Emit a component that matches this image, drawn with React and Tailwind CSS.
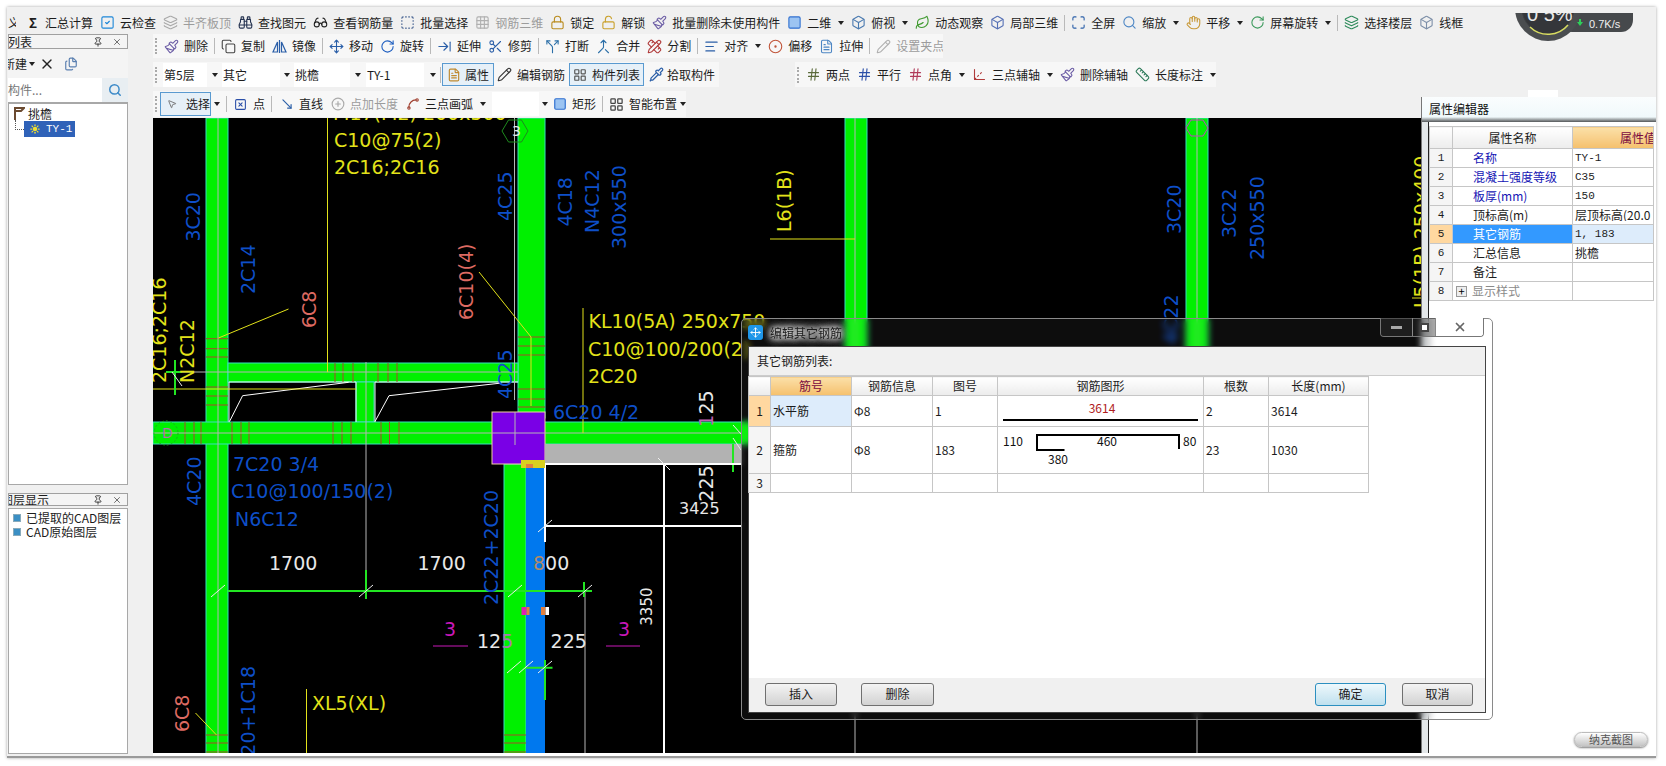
import {
  SquareCheck, Layers, Binoculars, Glasses, Grid3x3, Lock, LockOpen, Paintbrush, Square, Box, Leaf, Maximize, Search, Hand,
  RotateCw, Move, Scissors, ArrowRightToLine, Merge, Split, AlignLeft, CircleDot, FileText, Pencil, MousePointer2, SquareX,
  MoveDownRight, Spline, LayoutGrid, Pipette, Hash, Ruler, CirclePlus, Pin, X, Copy, Files, Axis3d, PencilRuler, SquareDashed, Sun,
} from 'lucide-react';

// 镜像 icon: two triangles either side of an axis, lucide has nothing close
const MirrorIcon = ({ size, color }) => (
  <svg viewBox="0 0 15 15" width={size} height={size} fill="none" stroke={color} strokeWidth="1.2">
    <path d="M7.5 1V14" />
    <path d="M5.5 3L1 13H5.5ZM9.5 3L14 13H9.5Z" />
  </svg>
);

const row1 = [
  { icon: SquareCheck, color: '#1c86d8', label: '云检查' },
  { icon: Layers, color: '#a8a8a8', label: '半齐板顶', off: true },
  { icon: Binoculars, color: '#23314f', label: '查找图元' },
  { icon: Glasses, color: '#222', label: '查看钢筋量' },
  { icon: SquareDashed, color: '#3c5a8c', label: '批量选择' },
  { icon: Grid3x3, color: '#b0b0b0', label: '钢筋三维', off: true },
  { icon: Lock, color: '#b98b1e', label: '锁定' },
  { icon: LockOpen, color: '#c9a02a', label: '解锁' },
  { icon: Paintbrush, color: '#6b5ca5', label: '批量删除未使用构件' },
  { icon: Square, color: '#2f6fd0', fill: '#9cc4f2', label: '二维', caret: true },
  { icon: Box, color: '#4a7ab0', label: '俯视', caret: true },
  { icon: Leaf, color: '#3f9a2f', label: '动态观察' },
  { icon: Box, color: '#5570b5', label: '局部三维' },
  { sep: true },
  { icon: Maximize, color: '#2b5fa8', label: '全屏' },
  { icon: Search, color: '#4d86c4', label: '缩放', caret: true },
  { icon: Hand, color: '#c99a3a', label: '平移', caret: true },
  { icon: RotateCw, color: '#3c9a5c', label: '屏幕旋转', caret: true },
  { sep: true },
  { icon: Layers, color: '#2d8a5a', label: '选择楼层' },
  { icon: Box, color: '#7d8fa8', label: '线框' },
];

const row2 = [
  { icon: Paintbrush, color: '#6b5ca5', label: '删除' },
  { sep: true },
  { icon: Copy, color: '#444', label: '复制' },
  { icon: MirrorIcon, color: '#2b5fa8', label: '镜像' },
  { sep: true },
  { icon: Move, color: '#2b5fa8', label: '移动' },
  { icon: RotateCw, color: '#1f5fc0', label: '旋转' },
  { sep: true },
  { icon: ArrowRightToLine, color: '#2b5fa8', label: '延伸' },
  { icon: Scissors, color: '#2b5fa8', label: '修剪' },
  { sep: true },
  { icon: Split, color: '#2b6fa8', label: '打断' },
  { icon: Merge, color: '#2b6fa8', label: '合并' },
  { icon: PencilRuler, color: '#b03a3a', label: '分割' },
  { sep: true },
  { icon: AlignLeft, color: '#2b5fa8', label: '对齐', caret: true },
  { icon: CircleDot, color: '#c0553a', label: '偏移' },
  { icon: FileText, color: '#4d86c4', label: '拉伸' },
  { sep: true },
  { icon: Pencil, color: '#b0b0b0', label: '设置夹点', off: true },
];

const row3Left = [
  { icon: Pencil, color: '#333', label: '编辑钢筋' },
];

const row3Axis = [
  { icon: Hash, color: '#5a6a3a', label: '两点' },
  { icon: Hash, color: '#2b4fa8', label: '平行' },
  { icon: Hash, color: '#b03a5a', label: '点角', caret: true },
  { icon: Axis3d, color: '#b03a3a', label: '三点辅轴', caret: true },
  { icon: Paintbrush, color: '#6b5ca5', label: '删除辅轴' },
  { icon: Ruler, color: '#2d7a5a', label: '长度标注', caret: true },
];

const Sep = () => <div className="w-px h-[16px] bg-[#b9b9b9] -mx-px shrink-0" />;
const Grip = () => <div className="h-[16px] border-l-2 border-dotted border-[#aaa] shrink-0" />;
const Caret = () => <span className="w-0 h-0 border-x-[3px] border-x-transparent border-t-[4px] border-t-[#222] shrink-0" />;

const Tool = ({ item }) => {
  if (item.sep) return <Sep />;
  const Icon = item.icon;
  return (
    <div className={item.off ? 'flex items-center shrink-0 text-[#9c9c9c]' : 'flex items-center shrink-0 text-[#1c1c1c]'}>
      <Icon size={15} color={item.color} fill={item.fill || 'none'} strokeWidth={1.75} />
      <span className="ml-[5px] whitespace-nowrap">{item.label}</span>
      {item.caret && <span className="ml-[7px] flex"><Caret /></span>}
    </div>
  );
};

const Select = ({ text, w, arrow }) => (
  <div className="flex items-center shrink-0 h-[24px]">
    <div className="bg-white h-full flex items-center px-px whitespace-nowrap" style={{ width: w }}>{text}</div>
    <div className="flex justify-center" style={{ width: arrow }}><Caret /></div>
  </div>
);

const T = ({ x, y, c, s = 19, r, children }) => (
  <text x={x} y={y} fill={c} fontSize={s} transform={r ? `rotate(-90 ${x} ${y})` : undefined}>{children}</text>
);

const yellow = '#e2e21a';
const blue = '#0e4fc8';
const salmon = '#dd6a62';
const white = '#e8e8e8';
const magenta = '#c818b8';
const tie = '#a8482a';

const CadCanvas = () => (
  <svg viewBox="153 118 1275 635" className="w-[1275px] h-[635px] bg-black shrink-0 block [font-family:'DejaVu_Sans',sans-serif]">
    {/* columns and beams */}
    <g fill="#00f000" stroke="#38e0c0" strokeWidth="1">
      <rect x="206" y="118" width="22" height="640" />
      <rect x="518" y="118" width="27" height="300" />
      <rect x="845" y="118" width="22" height="240" />
      <rect x="1186" y="118" width="22" height="240" />
      <rect x="228" y="363" width="290" height="19" />
      <rect x="356" y="382" width="18" height="40" />
      <rect x="153" y="422" width="600" height="22" />
      <rect x="504" y="464" width="22" height="290" />
    </g>
    <rect x="492" y="412" width="53" height="52" fill="#7a00e6" stroke="#f0d0a0" />
    <rect x="545" y="444" width="196" height="20" fill="#b2b2b2" />
    <rect x="526" y="464" width="19" height="290" fill="#0078ee" />
    <path d="M229 422V382H356V422M375 422V382H518" fill="none" stroke="#e8fff0" />
    <path d="M229.5 421.5L242.6 395.7L348.6 382.3M375 421.5L389 395.7L501.6 383" fill="none" stroke="#fff" />
    {/* stirrups */}
    <path
      d="M206 338.7H228M206 348.7H228M206 357H228M206 387H228M206 396H228M206 405H228M518 337H545M518 346H545M518 355H545M518 389H545M518 399H545M518 407H545M335 363V382M343 363V382M353 363V382M378 363V382M388 363V382M397 363V382M185 422V444M194 422V444M201 422V444M232 422V444M241 422V444M249 422V444M333 422V444M342 422V444M351 422V444M381 422V444M389.5 422V444M399 422V444M206 735H228M206 743H228M206 752H228M504 735H526M504 743H526M504 752H526"
      stroke={tie}
      strokeWidth="1"
    />
    {/* axes */}
    <path d="M218 118V753M514.5 118V400M515 412V445M167 372H518M153 433H741M366 362V583M585 591V753M855 118V753M1197 118V753" stroke="#b5b5b5" strokeWidth="1" />
    <path d="M327.5 118V372M583 308V433M153 389H356M218.5 338L288.5 309M479 272L531 337M531 337V406M195.5 713L216.5 735M306.5 689V753M770 239H855M1412 298H1421" stroke={yellow} strokeWidth="1" fill="none" />
    <path d="M228 591H592M366 570V599M584 582V597M526 667.7H552.5M545 660V700M733 444V472M175 360V395M166 372H182" stroke="#22e622" strokeWidth="2" fill="none" />
    <path d="M545 526H741M545 464V542M664 464V753M545 464H741" stroke="#fff" strokeWidth="2" fill="none" />
    <path d="M211 597L225 585M359 597L373 585M508 597L522 585M578 597L592 585M507 673L521 661M519 673L533 661M538 673L552 661M538 532L552 520M658 458L670 470M172 372L182 386M733 425L741 434M733 438L741 450" stroke="#eee" strokeWidth="1" />
    {/* grid markers */}
    <polygon points="502,131 508.5,120 521.5,120 528,131 521.5,142 508.5,142" fill="none" stroke="#1e8a1e" />
    <circle cx="166" cy="433" r="12" fill="none" stroke="#1eaa1e" strokeDasharray="2 2" />
    <polygon points="1186,128 1191,120 1203,120 1208,128 1203,136 1191,136" fill="none" stroke="#c040c0" />
    <T x={512} y={136} c={white} s={14}>3</T>
    <T x={162} y={438} c="#b070b0" s={14}>D</T>
    {/* handles */}
    <rect x="521" y="460" width="24" height="8" fill="#d8d020" />
    <rect x="526" y="464" width="7" height="4" fill="#e08040" />
    <rect x="521.5" y="607" width="5" height="8" fill="#e020b0" />
    <rect x="526.5" y="607" width="3" height="8" fill="#e08040" />
    <rect x="541" y="607" width="4.5" height="8" fill="#e08040" />
    <rect x="545.5" y="607" width="3.5" height="8" fill="#fff" />
    {/* yellow labels */}
    <T x={333} y={120} c={yellow}>M17(M2) 200x500</T>
    <T x={334} y={147} c={yellow}>C10@75(2)</T>
    <T x={334} y={174} c={yellow}>2C16;2C16</T>
    <T x={588.5} y={328} c={yellow}>KL10(5A) 250x750</T>
    <T x={588} y={356} c={yellow}>C10@100/200(2)</T>
    <T x={588} y={383} c={yellow}>2C20</T>
    <T x={312} y={710} c={yellow}>XL5(XL)</T>
    <T x={166} y={383} c={yellow} r>2C16;2C16</T>
    <T x={193.6} y={383} c={yellow} r>N2C12</T>
    <T x={791} y={232} c={yellow} r>L6(1B)</T>
    <T x={1428} y={308} c={yellow} r>L5(1B) 250x400</T>
    {/* blue labels */}
    <T x={200.5} y={241.6} c={blue} r>3C20</T>
    <T x={255} y={294} c={blue} r>2C14</T>
    <T x={512} y={221} c={blue} r>4C25</T>
    <T x={512} y={399} c={blue} r>4C25</T>
    <T x={572.5} y={226.6} c={blue} r>4C18</T>
    <T x={599} y={233} c={blue} r>N4C12</T>
    <T x={626} y={249} c={blue} r>300x550</T>
    <T x={553} y={419} c={blue}>6C20 4/2</T>
    <T x={200.5} y={506} c={blue} r>4C20</T>
    <T x={233} y={470.7} c={blue}>7C20 3/4</T>
    <T x={231} y={498} c={blue}>C10@100/150(2)</T>
    <T x={235} y={525.7} c={blue}>N6C12</T>
    <T x={498} y={605} c={blue} r>2C22+2C20</T>
    <T x={255} y={781} c={blue} r>2C20+1C18</T>
    <T x={1181} y={234} c={blue} r>3C20</T>
    <T x={1236} y={238} c={blue} r>3C22</T>
    <T x={1264} y={260} c={blue} r>250x550</T>
    <T x={1178} y={344} c={blue} r>4C22</T>
    {/* salmon labels */}
    <T x={316} y={328} c={salmon} r>6C8</T>
    <T x={473} y={320} c={salmon} r>6C10(4)</T>
    <T x={189} y={732} c={salmon} r>6C8</T>
    {/* dimensions */}
    <T x={269} y={570} c={white}>1700</T>
    <T x={417.5} y={570} c={white}>1700</T>
    <T x={533} y={570} c={white}><tspan fill="#b08a68">8</tspan>00</T>
    <T x={477} y={647.7} c={white}>12<tspan fill="#a87ab0">5</tspan></T>
    <T x={550.6} y={648} c={white}>225</T>
    <T x={652} y={625.7} c={white} s={15} r>3350</T>
    <T x={679} y={514} c={white} s={16}>3425</T>
    <T x={713} y={501.7} c={white} r>225</T>
    <T x={713} y={426.7} c={white} r><tspan fill="#c060b0">1</tspan>25</T>
    <T x={444} y={635.7} c={magenta}>3</T>
    <T x={618} y={635.7} c={magenta}>3</T>
    <path d="M433 646H468M606 646H640" stroke={magenta} />
  </svg>
);

const propRows = [
  { name: '名称', value: 'TY-1', mono: true, link: true },
  { name: '混凝土强度等级', value: 'C35', mono: true, link: true },
  { name: '板厚(mm)', value: '150', mono: true, link: true },
  { name: '顶标高(m)', value: '层顶标高(20.0' },
  { name: '其它钢筋', value: '1, 183', mono: true, active: true },
  { name: '汇总信息', value: '挑檐' },
  { name: '备注', value: '' },
  { name: '显示样式', value: '', group: true },
];

const cellBorder = 'border border-[#c6c6c6]';
const headCell = `${cellBorder} bg-gradient-to-b from-white to-[#ececec] font-normal`;
const orangeCell = `${cellBorder} bg-gradient-to-b from-[#fbe0a8] to-[#f5c06c] text-[#7a0a40] font-normal`;
const monoText = "[font-family:'Liberation_Mono','Noto_Sans_CJK_SC',monospace] text-[11px]";

const PropertyEditor = () => (
  <div className="absolute left-[1421px] top-[97px] w-[235px] h-[656px] flex flex-col border-l border-[#777] bg-[#e4e8ea]">
    <div className="h-[25px] shrink-0 flex items-center pl-[7px] pb-[2px] bg-gradient-to-b from-[#fafdfe] via-[#f0f9fb] via-80% to-[#55585a] text-[#111]">属性编辑器</div>
    <div className="flex-1 ml-[6px] bg-white border-l border-[#222] pt-[4px]">
      <table className="table-fixed border-collapse w-[224px] text-[12px]">
        <colgroup>
          <col className="w-[23px]" />
          <col className="w-[120px]" />
          <col className="w-[81px]" />
        </colgroup>
        <thead>
          <tr className="h-[22px]">
            <th className={headCell} />
            <th className={headCell}>属性名称</th>
            <th className={orangeCell}><div className="whitespace-nowrap overflow-hidden pl-[47px] text-left">属性值</div></th>
          </tr>
        </thead>
        <tbody>
          {propRows.map((row, i) => (
            <tr key={row.name} className="h-[19px]">
              <td className={row.active ? `${cellBorder} bg-[#ffd8a0] text-center ${monoText}` : `${cellBorder} bg-[#f5f5f5] text-center ${monoText}`}>{i + 1}</td>
              <td className={row.active ? `${cellBorder} bg-[#3399ff] text-white` : cellBorder}>
                <div className="flex items-center whitespace-nowrap">
                  {row.group ? (
                    <>
                      <span className="w-[11px] h-[11px] ml-[3px] mr-[5px] border border-[#999] bg-[#eee] text-[11px] leading-[9px] text-center text-black">+</span>
                      <span className="text-[#8a8a8a]">{row.name}</span>
                    </>
                  ) : (
                    <span className={row.link ? 'ml-[20px] text-[#1414b4]' : 'ml-[20px]'}>{row.name}</span>
                  )}
                </div>
              </td>
              <td className={row.active ? `${cellBorder} bg-[#ddecfb]` : cellBorder}>
                <div className={row.mono ? `pl-[2px] whitespace-nowrap overflow-hidden ${monoText}` : 'pl-[2px] whitespace-nowrap overflow-hidden'}>{row.value}</div>
              </td>
            </tr>
          ))}
        </tbody>
      </table>
    </div>
  </div>
);

const DialogButton = ({ children, primary, className }) => (
  <button
    type="button"
    className={
      primary
        ? `h-[23px] rounded-[3px] border border-[#2b8fc0] bg-gradient-to-b from-[#eef8fc] to-[#bfe0ee] text-[12px] ${className}`
        : `h-[23px] rounded-[3px] border border-[#707070] bg-gradient-to-b from-[#f4f4f4] to-[#d2d2d2] text-[12px] ${className}`
    }
  >
    {children}
  </button>
);

const RebarDialog = () => (
  <div className="absolute left-[741px] top-[318px] w-[752px] h-[402px] rounded-[5px] border border-[#8a8a8a] bg-white/5 backdrop-blur-[3px] flex flex-col px-[6px] pb-[6px]">
    <div className="h-[27px] shrink-0 flex items-center relative">
      <span className="w-[15px] h-[15px] rounded-[3px] bg-[#1e96e8] flex items-center justify-center"><Move size={11} color="#fff" /></span>
      <span className="ml-[7px] text-[#1c1c1c] [text-shadow:0_0_8px_#e4e4e4,0_0_8px_#e4e4e4,0_0_8px_#e4e4e4,0_0_4px_#e4e4e4]">编辑其它钢筋</span>
      <div className="absolute right-[2px] top-[-1px] h-[19px] flex rounded-b-[4px] border border-t-0 border-[#777] overflow-hidden">
        <div className="w-[32px] bg-[#2a2a2a]/60 flex items-center justify-center border-r border-[#888]"><span className="w-[11px] h-[3px] bg-[#a8a8a8]" /></div>
        <div className="w-[23px] bg-[#2a2a2a]/40 flex items-center justify-center border-r border-[#888]"><span className="w-[9px] h-[9px] border-2 border-[#444] bg-white" /></div>
        <div className="w-[47px] bg-white flex items-center justify-center"><X size={14} color="#666" strokeWidth={3} /></div>
      </div>
    </div>
    <div className="flex-1 bg-white flex flex-col border border-[#444] text-[#1c1c1c]">
      <div className="h-[29px] shrink-0 bg-[#f0f0f0] flex items-center pl-[8px] border-b border-[#ccc]">其它钢筋列表:</div>
      <div className="flex-1">
        <table className="table-fixed border-collapse w-[620px] -ml-px text-[12px]">
          <colgroup>
            <col className="w-[22px]" />
            <col className="w-[81px]" />
            <col className="w-[81px]" />
            <col className="w-[65px]" />
            <col className="w-[206px]" />
            <col className="w-[65px]" />
            <col className="w-[100px]" />
          </colgroup>
          <thead>
            <tr className="h-[19px]">
              <th className={headCell} />
              <th className={orangeCell}>筋号</th>
              <th className={headCell}>钢筋信息</th>
              <th className={headCell}>图号</th>
              <th className={headCell}>钢筋图形</th>
              <th className={headCell}>根数</th>
              <th className={headCell}>长度(mm)</th>
            </tr>
          </thead>
          <tbody>
            <tr className="h-[30px]">
              <td className={`${cellBorder} bg-[#ffd8a0] text-center`}>1</td>
              <td className={`${cellBorder} bg-[#ddecfb] pl-[2px]`}>水平筋</td>
              <td className={`${cellBorder} pl-[2px]`}>Φ8</td>
              <td className={`${cellBorder} pl-[2px]`}>1</td>
              <td className={`${cellBorder} p-0`}>
                <svg viewBox="0 0 206 30" className="block w-[206px] h-[30px]">
                  <text x="104" y="17" fill="#b01c1c" fontSize="12" textAnchor="middle">3614</text>
                  <path d="M5 24H200" stroke="#000" strokeWidth="2" />
                </svg>
              </td>
              <td className={`${cellBorder} pl-[2px]`}>2</td>
              <td className={`${cellBorder} pl-[2px]`}>3614</td>
            </tr>
            <tr className="h-[46px]">
              <td className={`${cellBorder} bg-[#f5f5f5] text-center`}>2</td>
              <td className={`${cellBorder} pl-[2px]`}>箍筋</td>
              <td className={`${cellBorder} pl-[2px]`}>Φ8</td>
              <td className={`${cellBorder} pl-[2px]`}>183</td>
              <td className={`${cellBorder} p-0`}>
                <svg viewBox="0 0 206 46" className="block w-[206px] h-[46px]">
                  <path d="M66.5 23H39V8H181V22" fill="none" stroke="#000" strokeWidth="2" />
                  <g fill="#111" fontSize="12">
                    <text x="5" y="19">110</text>
                    <text x="109" y="19" textAnchor="middle">460</text>
                    <text x="185" y="19">80</text>
                    <text x="60" y="37" textAnchor="middle">380</text>
                  </g>
                </svg>
              </td>
              <td className={`${cellBorder} pl-[2px]`}>23</td>
              <td className={`${cellBorder} pl-[2px]`}>1030</td>
            </tr>
            <tr className="h-[19px]">
              <td className={`${cellBorder} bg-[#f5f5f5] text-center`}>3</td>
              {[0, 1, 2, 3, 4, 5].map(i => <td key={i} className={cellBorder} />)}
            </tr>
          </tbody>
        </table>
      </div>
      <div className="h-[34px] shrink-0 bg-[#f0f0f0] flex items-center pl-[16px] pr-[12px] pb-[2px]">
        <DialogButton className="w-[72px]">插入</DialogButton>
        <DialogButton className="w-[73px] ml-[24px]">删除</DialogButton>
        <DialogButton primary className="w-[71px] ml-auto">确定</DialogButton>
        <DialogButton className="w-[71px] ml-[16px]">取消</DialogButton>
      </div>
    </div>
  </div>
);

const SpeedWidget = () => (
  <svg viewBox="1510 13 130 32" className="absolute left-[1510px] top-[13px] w-[130px] h-[32px] [font-family:'Liberation_Sans',sans-serif]">
    <rect x="1560" y="-20" width="73" height="52" rx="12" fill="#46494c" />
    <circle cx="1548" cy="8" r="33" fill="#4a4d50" />
    <circle cx="1548" cy="8" r="26" fill="#34363a" stroke="#3d3f42" />
    <path d="M1530 27A26 26 0 0 0 1568 25" fill="none" stroke="#d8dc60" strokeWidth="1.5" />
    <text x="1527" y="21" fill="#e8e8e8" fontSize="20">0 5%</text>
    <path d="M1580 26L1577 22H1579V19H1581V22H1583Z" fill="#2fd05a" />
    <text x="1589" y="28" fill="#f0f0f0" fontSize="11">0.7K/s</text>
  </svg>
);

const App = () => (
  <div className="relative w-[1666px] h-[766px] overflow-hidden bg-white text-[12px] leading-none text-[#1c1c1c] [font-family:'Noto_Sans_CJK_SC',sans-serif]">
    <div className="absolute left-[7px] top-[7px] w-[1649px] h-[751px] flex flex-col bg-[#f0f0f0] border-b-2 border-[#9a9a9a] shadow-[0_0_3px_rgba(0,0,0,0.35)]">
      {/* top toolbar */}
      <div className="h-[27px] shrink-0 flex items-center gap-[7px] pt-[4px] pl-[1px] overflow-hidden">
        <span className="w-[8px] overflow-hidden">义</span>
        <span className="ml-[6px] font-bold text-[13px]">Σ</span>
        <span className="ml-px">汇总计算</span>
        {row1.map((item, i) => <Tool key={i} item={item} />)}
      </div>
      <div className="flex-1 flex min-h-0">
        {/* left panels */}
        <div className="w-[120px] shrink-0 flex flex-col ml-px">
          <div className="h-[15px] shrink-0 flex items-center border border-[#a0a0a0] bg-[#f4f4f4] overflow-hidden">
            <span className="-ml-[1px] flex-1">列表</span>
            <Pin size={10} color="#222" className="mr-[9px]" />
            <X size={10} color="#555" className="mr-[5px]" />
          </div>
          <div className="h-[29px] shrink-0 flex items-center overflow-hidden bg-[#f4f4f4]">
            <span className="-ml-[5px]">新建</span>
            <span className="ml-[2px] flex"><Caret /></span>
            <X size={16} color="#222" className="ml-[4px]" />
            <Files size={14} color="#5a7fb0" className="ml-[9px]" />
          </div>
          <div className="h-[24px] shrink-0 flex">
            <div className="w-[94px] bg-white flex items-center text-[#777]">构件...</div>
            <div className="flex-1 flex items-center justify-center bg-[#e8eef2]"><Search size={14} color="#3c8ac8" strokeWidth={2.5} /></div>
          </div>
          <div className="h-[383px] shrink-0 bg-white border border-[#a8a8a8] border-t-2 relative">
            <div className="flex items-center pl-[4px] pt-[3px]">
              <svg viewBox="0 0 12 13" className="w-[12px] h-[13px]">
                <path d="M2 13V1H11L8 4H3" fill="none" stroke="#6b4a30" strokeWidth="2" />
              </svg>
              <span className="ml-[3px]">挑檐</span>
            </div>
            <div className="flex items-center mt-[1px] ml-[6px]">
              <span className="w-[9px] h-[10px] -mt-[9px] border-l border-b border-dotted border-[#555]" />
              <div className="w-[51px] h-[16px] bg-[#2f62b8] flex items-center text-white">
                <Sun size={10} color="#f0e030" fill="#f0e030" strokeWidth={3} className="ml-[6px]" />
                <span className={`ml-[6px] ${monoText}`}>TY-1</span>
              </div>
            </div>
          </div>
          <div className="h-[13px] shrink-0 mt-[8px] flex items-center border border-[#a0a0a0] bg-[#f4f4f4] overflow-hidden">
            <span className="-ml-[8px] flex-1">图层显示</span>
            <Pin size={10} color="#222" className="mr-[9px]" />
            <X size={10} color="#555" className="mr-[5px]" />
          </div>
          <div className="flex-1 mt-[2px] mb-[2px] bg-white border border-[#a8a8a8] pt-[2px]">
            <div className="flex items-center h-[14px]">
              <span className="w-[8px] h-[8px] ml-[4px] bg-[#3b8fc4] border border-[#8ab]" />
              <span className="ml-[5px] whitespace-nowrap">已提取的CAD图层</span>
            </div>
            <div className="flex items-center h-[14px]">
              <span className="w-[8px] h-[8px] ml-[4px] bg-[#3b8fc4] border border-[#8ab]" />
              <span className="ml-[5px] whitespace-nowrap">CAD原始图层</span>
            </div>
          </div>
        </div>
        {/* main column */}
        <div className="flex-1 min-w-0 flex flex-col pl-[25px]">
          <div className="h-[24px] shrink-0 w-[790px] flex items-center gap-[7px] bg-[#f7f7f7] pl-[2px] overflow-hidden">
            <Grip />
            <Tool item={row2[0]} />
            {row2.slice(1).map((item, i) => <Tool key={i} item={item} />)}
          </div>
          <div className="h-[25px] shrink-0 mt-[4px] flex">
            <div className="w-[566px] flex items-center bg-[#f7f7f7] pl-[2px]">
              <Grip />
              <div className="ml-[6px] flex">
                <Select text="第5层" w={44} arrow={15} />
                <Select text="其它" w={58} arrow={14} />
                <Select text="挑檐" w={56} arrow={16} />
                <Select text="TY-1" w={58} arrow={17} />
              </div>
              <Sep />
              <div className="ml-[2px] w-[52px] h-[23px] shrink-0 flex items-center pl-[4px] border border-[#5a9ad0] bg-[#e6f0f8]">
                <FileText size={14} color="#c08a30" />
                <span className="ml-[4px]">属性</span>
              </div>
              <div className="ml-[3px]"><Tool item={row3Left[0]} /></div>
              <div className="ml-[4px] w-[75px] h-[23px] shrink-0 flex items-center pl-[3px] border border-[#5a9ad0] bg-[#e6f0f8]">
                <LayoutGrid size={14} color="#555" />
                <span className="ml-[5px] whitespace-nowrap">构件列表</span>
              </div>
              <div className="ml-[5px] flex items-center shrink-0">
                <Pipette size={15} color="#2b5fa8" />
                <span className="ml-[3px] whitespace-nowrap">拾取构件</span>
              </div>
            </div>
            <div className="ml-[76px] w-[421px] flex items-center gap-[7px] bg-[#f7f7f7] pl-[2px]">
              <Grip />
              {row3Axis.map((item, i) => <Tool key={i} item={item} />)}
            </div>
          </div>
          <div className="h-[26px] shrink-0 mt-[4px] w-[533px] flex items-center whitespace-nowrap bg-[#f7f7f7] pl-[2px] [&>*]:shrink-0">
            <Grip />
            <div className="ml-[3px] w-[51px] h-[24px] flex items-center pl-[6px] border border-[#5a9ad0] bg-[#e6f0f8]">
              <MousePointer2 size={12} color="#666" />
              <span className="ml-[9px]">选择</span>
            </div>
            <span className="ml-[3px] flex"><Caret /></span>
            <div className="ml-[7px]"><Sep /></div>
            <SquareX size={13} color="#2b4fa8" className="ml-[7px]" />
            <span className="ml-[6px]">点</span>
            <div className="ml-[7px]"><Sep /></div>
            <MoveDownRight size={14} color="#2b5fa8" className="ml-[8px]" />
            <span className="ml-[5px]">直线</span>
            <CirclePlus size={14} color="#aaa" className="ml-[8px]" />
            <span className="ml-[5px] text-[#9c9c9c]">点加长度</span>
            <Spline size={14} color="#a04030" className="ml-[8px]" />
            <span className="ml-[5px]">三点画弧</span>
            <span className="ml-[7px] flex"><Caret /></span>
            <div className="ml-[6px] w-[47px] h-[24px] bg-white" />
            <span className="ml-[3px] flex"><Caret /></span>
            <Square size={14} color="#2f6fd0" fill="#9cc4f2" className="ml-[5px]" />
            <span className="ml-[5px]">矩形</span>
            <div className="ml-[7px]"><Sep /></div>
            <LayoutGrid size={15} color="#444" className="ml-[6px]" />
            <span className="ml-[5px]">智能布置</span>
            <span className="ml-[3px] flex"><Caret /></span>
          </div>
          <div className="flex-1 min-h-0 mt-px flex">
            <CadCanvas />
            <div className="flex-1 bg-white" />
          </div>
          <div className="h-[3px] shrink-0 bg-white" />
        </div>
      </div>
    </div>
    <SpeedWidget />
    <PropertyEditor />
    <div className="absolute left-[1528px] top-[90px] w-[30px] h-[7px] bg-white" />
    <RebarDialog />
    <div className="absolute left-[1574px] top-[732px] w-[74px] h-[15px] rounded-full border border-[#bbb] bg-gradient-to-b from-white to-[#c4c4c4] shadow-[0_1px_2px_rgba(0,0,0,0.5)] flex items-center justify-center text-[11px] text-[#555]">纳克截图</div>
  </div>
);

export default App;
